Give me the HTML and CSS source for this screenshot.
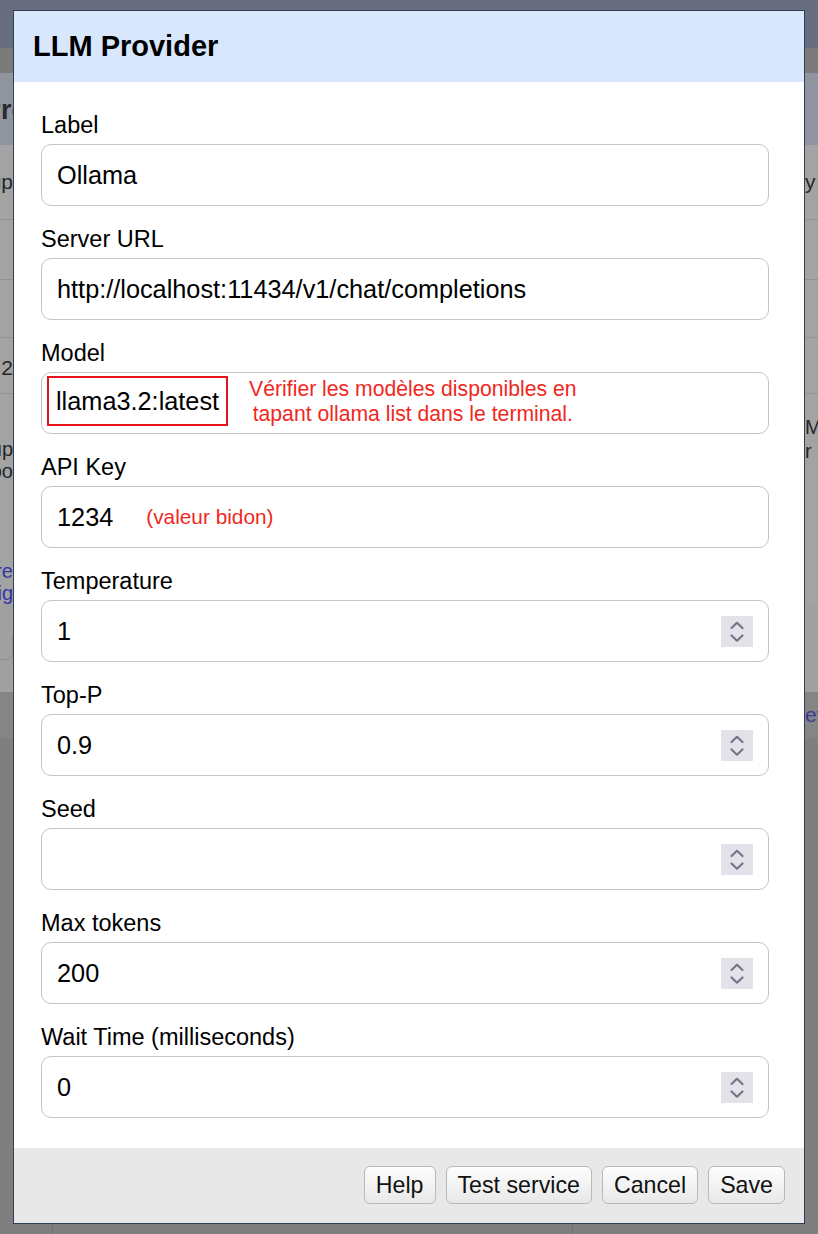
FILE: index.html
```html
<!DOCTYPE html>
<html lang="fr">
<head>
<meta charset="utf-8">
<title>LLM Provider</title>
<link rel="stylesheet" href="styles.css">
</head>
<body>
<div class="page">
  <div class="bg">
    <div class="b-top"></div>
    <div class="b-tool"></div>
    <div class="b-title band">
      <span class="edge left from-start big"><span class="shift-p">Pro</span></span>
      <span class="edge right"></span>
    </div>
    <div class="b-rows">
      <div class="row r1 band"><span class="edge left">Setup</span><span class="edge right">y param</span></div>
      <div class="row r2 band"><span class="edge left"></span><span class="edge right"></span></div>
      <div class="row r3 band"><span class="edge left"></span><span class="edge right"></span></div>
      <div class="row r4 band"><span class="edge left">3.2</span><span class="edge right"></span></div>
      <div class="row r5 band">
        <span class="edge left stack"><span>Setup</span><span>Too</span><span class="gap"></span><span class="link">More</span><span class="link">Config</span></span>
        <span class="edge right stack"><span class="pad"></span><span>M</span><span>r par</span></span>
      </div>
      <div class="row r6 band"><span class="edge left"><span class="ghost-btn"></span></span><span class="edge right"></span></div>
    </div>
    <div class="b-bottom">
      <div class="b-strip band"><span class="edge left"></span><span class="edge right link">ev</span></div>
      <div class="b-fill"></div>
      <div class="b-cols"><span class="col c1"></span><span class="col c2"></span><span class="col c3"></span></div>
    </div>
  </div>

  <div class="modal">
    <div class="modal-header">LLM Provider</div>
    <div class="modal-body">
      <div class="field">
        <label class="label">Label</label>
        <div class="input">Ollama</div>
      </div>
      <div class="field">
        <label class="label">Server URL</label>
        <div class="input">http://localhost:11434/v1/chat/completions</div>
      </div>
      <div class="field">
        <label class="label">Model</label>
        <div class="input model">
          <span class="model-box">llama3.2:latest</span>
          <span class="note">Vérifier les modèles disponibles en<br>tapant ollama list dans le terminal.</span>
        </div>
      </div>
      <div class="field">
        <label class="label">API Key</label>
        <div class="input">1234<span class="hint">(valeur bidon)</span></div>
      </div>
      <div class="field">
        <label class="label">Temperature</label>
        <div class="input">1<span class="spin"><svg width="32" height="31" viewBox="0 0 32 31"><polyline points="10.5,12 16,6.8 21.5,12"/><polyline points="10.5,19.5 16,24.7 21.5,19.5"/></svg></span></div>
      </div>
      <div class="field">
        <label class="label">Top-P</label>
        <div class="input">0.9<span class="spin"><svg width="32" height="31" viewBox="0 0 32 31"><polyline points="10.5,12 16,6.8 21.5,12"/><polyline points="10.5,19.5 16,24.7 21.5,19.5"/></svg></span></div>
      </div>
      <div class="field">
        <label class="label">Seed</label>
        <div class="input"><span class="spin"><svg width="32" height="31" viewBox="0 0 32 31"><polyline points="10.5,12 16,6.8 21.5,12"/><polyline points="10.5,19.5 16,24.7 21.5,19.5"/></svg></span></div>
      </div>
      <div class="field">
        <label class="label">Max tokens</label>
        <div class="input">200<span class="spin"><svg width="32" height="31" viewBox="0 0 32 31"><polyline points="10.5,12 16,6.8 21.5,12"/><polyline points="10.5,19.5 16,24.7 21.5,19.5"/></svg></span></div>
      </div>
      <div class="field">
        <label class="label">Wait Time (milliseconds)</label>
        <div class="input">0<span class="spin"><svg width="32" height="31" viewBox="0 0 32 31"><polyline points="10.5,12 16,6.8 21.5,12"/><polyline points="10.5,19.5 16,24.7 21.5,19.5"/></svg></span></div>
      </div>
    </div>
    <div class="modal-footer">
      <button class="btn">Help</button>
      <button class="btn">Test service</button>
      <button class="btn">Cancel</button>
      <button class="btn">Save</button>
    </div>
  </div>
</div>
</body>
</html>
```

FILE: styles.css
```css
html, body {
  margin: 0;
  padding: 0;
}
body {
  width: 818px;
  height: 1234px;
  overflow: hidden;
  font-family: "Liberation Sans", Arial, Helvetica, sans-serif;
  color: #000;
}
.page {
  position: relative;
  width: 818px;
  height: 1234px;
}

/* ---------- dimmed background page ---------- */
.bg {
  display: flex;
  flex-direction: column;
  height: 1234px;
  background: #7f7f7f;
}
.b-top { height: 48px; background: #676c7e; }
.b-tool { height: 25px; background: #7b7b7b; }
.band {
  display: flex;
  justify-content: space-between;
}
.edge {
  width: 13px;
  overflow: hidden;
  white-space: nowrap;
  display: flex;
  font-size: 21px;
  color: #262626;
}
.edge.left { justify-content: flex-end; }
.edge.left.from-start { justify-content: flex-start; }
.edge.right { justify-content: flex-start; }
.b-title {
  height: 72px;
  background: #90949f;
  align-items: center;
}
.b-title .big {
  font-weight: bold;
  font-size: 27px;
  color: #2a2a2a;
  margin-top: 2px;
}
.shift-p { margin-left: -17px; }
.b-rows {
  height: 547px;
  background: #a3a3a3;
  display: flex;
  flex-direction: column;
}
.row { border-bottom: 1px solid #929292; }
.r1 { height: 74px; align-items: center; }
.r2 { height: 59px; }
.r3 { height: 57px; }
.r4 { height: 56px; align-items: center; padding-top: 4px; box-sizing: border-box; }
.r5 { height: 210px; border-bottom: none; }
.r6 { flex: 1; border-bottom: none; align-items: center; background: #a0a0a0; }
.stack {
  flex-direction: column;
  align-items: flex-end;
  font-size: 20px;
  line-height: 22px;
}
.edge.right.stack { align-items: flex-start; line-height: 24px; }
.stack .gap { height: 78px; }
.stack .pad { height: 21px; }
.link { color: #3636a2; }
.ghost-btn {
  flex: none;
  width: 40px;
  height: 32px;
  border: 1px solid #8f8f8f;
  border-radius: 6px;
  margin-top: -10px;
}
.b-bottom {
  flex: 1;
  display: flex;
  flex-direction: column;
}
.b-strip {
  height: 46px;
  background: #858585;
  align-items: center;
}
.b-strip .link { color: #3a3a9a; }
.b-fill { flex: 1; }
.b-cols {
  height: 12px;
  display: flex;
}
.col { display: block; }
.c1 { width: 52px; }
.c2 { width: 519px; border-left: 1px solid #707070; }
.c3 { flex: 1; border-left: 1px solid #707070; }

/* ---------- modal ---------- */
.modal {
  position: absolute;
  left: 13px;
  top: 10px;
  width: 792px;
  box-sizing: border-box;
  border: 1px solid #2e3f57;
  background: #fff;
  display: flex;
  flex-direction: column;
}
.modal-header {
  height: 71px;
  background: #d9e7fd;
  display: flex;
  align-items: center;
  padding-left: 19px;
  font-weight: bold;
  font-size: 29px;
}
.modal-body {
  padding: 28px 35px 30px 27px;
  display: flex;
  flex-direction: column;
  gap: 18px;
}
.field {
  display: flex;
  flex-direction: column;
}
.label {
  display: block;
  font-size: 23.5px;
  line-height: 27px;
  padding-top: 2px;
  margin-bottom: 5px;
}
.input {
  height: 62px;
  box-sizing: border-box;
  border: 1px solid #c4c4c4;
  border-radius: 10px;
  display: flex;
  align-items: center;
  padding: 0 15px;
  font-size: 25.3px;
  white-space: nowrap;
}
.input.model {
  padding: 3px 0 0 5px;
  align-items: flex-start;
}
.model-box {
  height: 50px;
  box-sizing: border-box;
  border: 2px solid #e3141c;
  padding: 0 7px;
  display: flex;
  align-items: center;
}
.note {
  margin-left: 21px;
  text-align: center;
  color: #f0281e;
  font-size: 21.2px;
  line-height: 25px;
  white-space: nowrap;
}
.hint {
  margin-left: 33px;
  color: #f0281e;
  font-size: 20.8px;
}
.spin {
  margin-left: auto;
  width: 32px;
  height: 31px;
  background: #e3e2e9;
  display: flex;
}
.spin polyline {
  fill: none;
  stroke: #77748a;
  stroke-width: 2.2;
  stroke-linecap: round;
  stroke-linejoin: round;
}
.modal-footer {
  height: 75px;
  box-sizing: border-box;
  background: #e8e8e8;
  display: flex;
  justify-content: flex-end;
  align-items: flex-start;
  gap: 10px;
  padding: 18px 19px 0 0;
}
.btn {
  height: 38px;
  box-sizing: border-box;
  padding: 0 11px;
  border: 1px solid #b9b9b9;
  border-radius: 6px;
  background: linear-gradient(#fdfdfd, #e8e8e8);
  font-family: "Liberation Sans", Arial, Helvetica, sans-serif;
  font-size: 23.2px;
  color: #111;
  margin: 0;
}
```
